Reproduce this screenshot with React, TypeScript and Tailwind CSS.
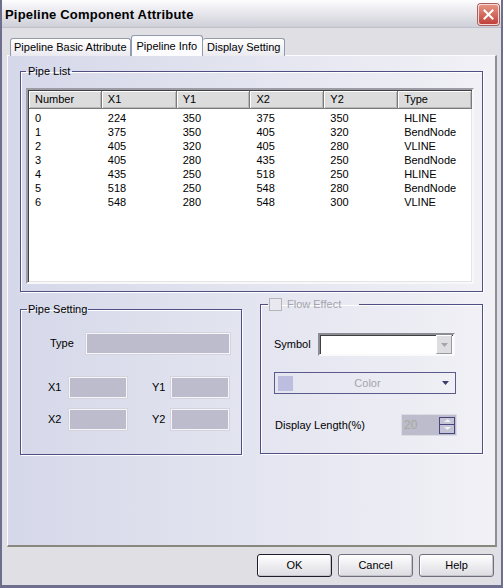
import React from 'react';

const columns = [
  { name: 'Number', w: 'w-[73px]' },
  { name: 'X1', w: 'w-[75px]' },
  { name: 'Y1', w: 'w-[74px]' },
  { name: 'X2', w: 'w-[74px]' },
  { name: 'Y2', w: 'w-[74px]' },
  { name: 'Type', w: 'w-[74px]' },
];

const rows = [
  ['0', '224', '350', '375', '350', 'HLINE'],
  ['1', '375', '350', '405', '320', 'BendNode'],
  ['2', '405', '320', '405', '280', 'VLINE'],
  ['3', '405', '280', '435', '250', 'BendNode'],
  ['4', '435', '250', '518', '250', 'HLINE'],
  ['5', '518', '250', '548', '280', 'BendNode'],
  ['6', '548', '280', '548', '300', 'VLINE'],
];

function DisabledBox({ w }: { w: string }) {
  return <div className={`${w} h-[21px] bg-[#bcbccc] border border-[#f6f6fa] shadow-[0_0_0_1px_#d4d4de]`} />;
}

function XpButton({ label, isDefault }: { label: string; isDefault?: boolean }) {
  return (
    <button
      className={`w-[75px] h-[23px] rounded-[3px] border ${isDefault ? 'border-[#1c1c2c]' : 'border-[#6f6f7f]'} bg-gradient-to-b from-white to-[#dcdce2] shadow-[inset_-1px_-1px_0_#c4c4cc,inset_1px_1px_0_#fff] text-[11px] leading-[13px]`}
    >
      {label}
    </button>
  );
}

export default function App() {
  return (
    <div className="w-[503px] h-[588px] flex flex-col bg-[#e0dfe3] border-l-2 border-r-2 border-b-[3px] border-[#6e6e8e] font-['Liberation_Sans',Arial,sans-serif] text-[11px] leading-[13px] text-black overflow-hidden">
      {/* title bar */}
      <div className="h-[28px] flex items-center justify-between pl-[3px] pr-[2px] pt-[2px] bg-gradient-to-b from-[#fdfdfe] via-[#e6e6ec] to-[#cfcfd8] border-b border-[#c0c0cc]">
        <span className="font-bold text-[13px] leading-[16px] tracking-[0.2px]">Pipeline Component Attribute</span>
        <div className="w-[21px] h-[21px] rounded-[3px] border border-[#f4d8d4] bg-gradient-to-b from-[#e49484] to-[#c0403c] shadow-[0_0_0_1px_#a86060] flex items-center justify-center">
          <svg width="11" height="11" viewBox="0 0 11 11">
            <path d="M1.5 1.5 L9.5 9.5 M9.5 1.5 L1.5 9.5" stroke="#fff" strokeWidth="2" strokeLinecap="square" />
          </svg>
        </div>
      </div>

      <div className="flex-1 flex flex-col pl-[5px] pt-[7px]">
        {/* tabs */}
        <div className="flex items-end h-[21px] ml-[3px] relative z-10 -mb-px">
          <div className="h-[18px] px-[3px] flex items-center border border-b-0 border-[#919bac] rounded-t-[3px] bg-gradient-to-b from-white to-[#ebeaf0]">
            Pipeline Basic Attribute
          </div>
          <div className="h-[21px] px-[5px] flex items-center border border-b-0 border-[#919bac] rounded-t-[3px] bg-[#fcfcfe]">
            Pipeline Info
          </div>
          <div className="h-[18px] px-[4px] flex items-center border border-b-0 border-l-0 border-[#919bac] rounded-t-[3px] bg-gradient-to-b from-white to-[#ebeaf0]">
            Display Setting
          </div>
        </div>

        {/* tab page */}
        <div className="w-[490px] h-[492px] border-l border-t border-[#fcfcfe] border-r-2 border-b-2 border-r-[#8e8e96] border-b-[#88887e] bg-gradient-to-r from-[#d5d8e9] to-[#f1f1f6] pt-[9px] pl-[12px]">
          <fieldset className="w-[463px] border border-[#4f4f84] shadow-[inset_1px_1px_0_#fff,1px_1px_0_#fff]">
            <legend className="ml-[5px] px-[2px] leading-[13px]">Pipe List</legend>
            <div className="pt-[10px] pl-[5px] pb-[7px]">
              <div className="w-[448px] h-[196px] bg-white border-2 border-t-[#9c9ca4] border-l-[#9c9ca4] border-b-[#f8f8f8] border-r-[#f8f8f8] shadow-[inset_1px_1px_0_#404040,inset_-1px_-1px_0_#e4e4e8] overflow-hidden">
                <div className="flex h-[18px] mt-px ml-px">
                  {columns.map((c) => (
                    <div
                      key={c.name}
                      className={`${c.w} h-[18px] flex items-center pl-[6px] bg-[#dcdcdc] border-r border-b border-[#7a7a7a] shadow-[inset_1px_1px_0_#fff,inset_-1px_-1px_0_#b8b8b8]`}
                    >
                      {c.name}
                    </div>
                  ))}
                </div>
                <div className="pt-[2px] ml-px">
                  {rows.map((r) => (
                    <div key={r[0]} className="flex h-[14px] items-center">
                      {r.map((v, i) => (
                        <div key={i} className={`${columns[i].w} pl-[6px]`}>
                          {v}
                        </div>
                      ))}
                    </div>
                  ))}
                </div>
              </div>
            </div>
          </fieldset>

          <div className="flex items-start mt-[6px]">
            {/* Pipe Setting */}
            <fieldset className="w-[222px] mt-[5px] border border-[#4f4f84] shadow-[inset_1px_1px_0_#fff,1px_1px_0_#fff]">
              <legend className="ml-[6px] px-[1px] leading-[13px]">Pipe Setting</legend>
              <div className="pt-[17px] pb-[24px]">
                <div className="flex items-center h-[21px] pl-[29px]">
                  <span className="w-[36px]">Type</span>
                  <DisabledBox w="w-[144px]" />
                </div>
                <div className="flex items-center h-[21px] pl-[27px] mt-[23px]">
                  <span className="w-[21px]">X1</span>
                  <DisabledBox w="w-[58px]" />
                  <span className="w-[19px] ml-[25px]">Y1</span>
                  <DisabledBox w="w-[58px]" />
                </div>
                <div className="flex items-center h-[21px] pl-[27px] mt-[11px]">
                  <span className="w-[21px]">X2</span>
                  <DisabledBox w="w-[58px]" />
                  <span className="w-[19px] ml-[25px]">Y2</span>
                  <DisabledBox w="w-[58px]" />
                </div>
              </div>
            </fieldset>

            {/* Flow Effect */}
            <fieldset className="w-[223px] ml-[18px] border border-[#4f4f84] shadow-[inset_1px_1px_0_#fff,1px_1px_0_#fff]">
              <legend className="ml-[7px] pr-[18px] pl-px flex items-center gap-[5px] leading-[13px] text-[#a4a4ac]">
                <span className="w-[13px] h-[13px] border border-[#b4b4bc] bg-[#e8e8ee] inline-block" />
                Flow Effect
              </legend>
              <div className="pt-[22px] pb-[17px] pl-[13px]">
                <div className="flex items-center h-[23px]">
                  <span className="w-[44px]">Symbol</span>
                  <div className="w-[137px] h-[23px] bg-white border-2 border-t-[#8c8c94] border-l-[#8c8c94] border-b-[#fafafa] border-r-[#fafafa] shadow-[inset_1px_1px_0_#404040] flex justify-end items-center pr-px">
                    <div className="w-[16px] h-[19px] bg-[#dedee2] border border-t-white border-l-white border-b-[#9a9aa2] border-r-[#9a9aa2] flex items-center justify-center">
                      <svg width="7" height="4" viewBox="0 0 7 4">
                        <path d="M0 0 H7 L3.5 4 Z" fill="#a4a4ac" />
                      </svg>
                    </div>
                  </div>
                </div>
                <div className="mt-[16px] w-[182px] h-[22px] border border-[#5a5a8c] flex items-center pl-[3px] pr-[6px]">
                  <div className="w-[15px] h-[15px] bg-[#bdbde0]" />
                  <span className="flex-1 text-center text-[#a4a4b0] leading-[13px]">Color</span>
                  <svg width="7" height="4" viewBox="0 0 7 4">
                    <path d="M0 0 H7 L3.5 4 Z" fill="#3c3c6c" />
                  </svg>
                </div>
                <div className="mt-[20px] flex items-center h-[22px] pl-px">
                  <span className="w-[126px]">Display Length(%)</span>
                  <div className="w-[56px] h-[22px] bg-[#bcbccc] border border-[#dcdce4] flex items-center pl-[2px] pr-px">
                    <span className="flex-1 text-[#a8a89c] text-[12px]">20</span>
                    <div className="flex flex-col w-[16px] h-[17px]">
                      <div className="h-[8px] border border-[#464680] bg-[#c4c4d4] flex items-center justify-center">
                        <svg width="7" height="3" viewBox="0 0 7 3">
                          <path d="M0 3 H7 L3.5 0 Z" fill="#f0f0f4" />
                        </svg>
                      </div>
                      <div className="h-[9px] border border-t-0 border-[#464680] bg-[#c4c4d4] flex items-center justify-center">
                        <svg width="7" height="3" viewBox="0 0 7 3">
                          <path d="M0 0 H7 L3.5 3 Z" fill="#f0f0f4" />
                        </svg>
                      </div>
                    </div>
                  </div>
                </div>
              </div>
            </fieldset>
          </div>
        </div>

        {/* buttons */}
        <div className="flex justify-end gap-[6px] mt-[7px] pr-[7px]">
          <XpButton label="OK" isDefault />
          <XpButton label="Cancel" />
          <XpButton label="Help" />
        </div>
      </div>
    </div>
  );
}
